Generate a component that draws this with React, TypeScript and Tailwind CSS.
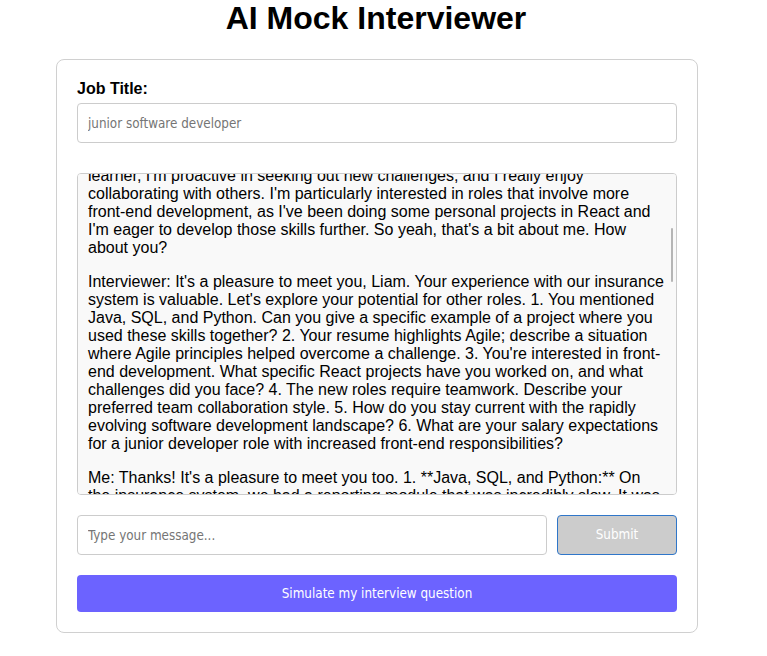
import { useEffect, useRef } from "react";

const earlier = [
  "Interviewer: Hello, and welcome! Thanks for taking the time to speak with us today. To start, could you tell me a little about yourself and what brings you here?",
];

const introHidden =
  "Me: Hi, thanks for having me. I'm Liam, and I've been working as a junior software developer for about a year and a half now, mostly on our company's internal insurance system. I work a lot with Java, SQL, and Python, and our team follows Agile practices. I'd describe myself as a quick";

const introVisible =
  "learner, I'm proactive in seeking out new challenges, and I really enjoy collaborating with others. I'm particularly interested in roles that involve more front-end development, as I've been doing some personal projects in React and I'm eager to develop those skills further. So yeah, that's a bit about me. How about you?";

const messages = [
  "Interviewer: It's a pleasure to meet you, Liam. Your experience with our insurance system is valuable. Let's explore your potential for other roles. 1. You mentioned Java, SQL, and Python. Can you give a specific example of a project where you used these skills together? 2. Your resume highlights Agile; describe a situation where Agile principles helped overcome a challenge. 3. You're interested in front-end development. What specific React projects have you worked on, and what challenges did you face? 4. The new roles require teamwork. Describe your preferred team collaboration style. 5. How do you stay current with the rapidly evolving software development landscape? 6. What are your salary expectations for a junior developer role with increased front-end responsibilities?",
  "Me: Thanks! It's a pleasure to meet you too. 1. **Java, SQL, and Python:** On the insurance system, we had a reporting module that was incredibly slow. It was pulling data with Java, so I rewrote the heavy queries in SQL and used a Python script to pre-aggregate the results overnight, which cut the load time from minutes to seconds.",
];

const uiFont = "font-['DejaVu_Sans_Condensed','Liberation_Sans',sans-serif] text-[13.33px]";

export default function App() {
  const boxRef = useRef<HTMLDivElement>(null);
  const lineRef = useRef<HTMLDivElement>(null);

  useEffect(() => {
    if (boxRef.current && lineRef.current) {
      boxRef.current.scrollTop = lineRef.current.offsetTop + 6;
    }
  }, []);

  return (
    <div className="w-[752px] bg-white font-['Liberation_Sans',Arial,sans-serif] text-black">
      <h1 className="text-center text-[32px] font-bold leading-[37px]">AI Mock Interviewer</h1>

      <div className="ml-[56px] mt-[22px] w-[642px] rounded-lg border border-[#d0d0d0] p-5">
        <label className="mb-[5px] block text-base font-bold leading-[18px]">Job Title:</label>
        <input
          className={`h-[40px] w-full rounded border border-[#ccc] px-[10px] text-black outline-none placeholder:text-[#757575] ${uiFont}`}
          placeholder="junior software developer"
        />

        <div className="relative mt-[30px]">
          <div
            ref={boxRef}
            className="h-[322px] overflow-y-auto rounded border border-[#ccc] bg-[#f9f9f9] p-[10px] text-base leading-[normal] [scrollbar-width:none]"
          >
            {earlier.map((m) => (
              <p key={m} className="mb-4">
                {m}
              </p>
            ))}
            <div>{introHidden}</div>
            <div ref={lineRef} className="mb-4">
              {introVisible}
            </div>
            {messages.map((m) => (
              <p key={m} className="mb-4">
                {m}
              </p>
            ))}
          </div>
          <div className="absolute right-[4px] top-[55px] h-[54px] w-[2px] rounded-full bg-[#b5b5b5]" />
        </div>

        <div className="mt-[20px] flex gap-[10px]">
          <input
            className={`h-[40px] flex-1 rounded border border-[#ccc] px-[10px] outline-none placeholder:text-[#757575] ${uiFont}`}
            placeholder="Type your message..."
          />
          <button
            className={`h-[40px] w-[120px] rounded border border-[#2f76c9] bg-[#cccccc] text-white ${uiFont}`}
          >
            Submit
          </button>
        </div>

        <button className={`mt-[20px] h-[37px] w-full rounded bg-[#6c63ff] text-white ${uiFont}`}>
          Simulate my interview question
        </button>
      </div>
    </div>
  );
}
